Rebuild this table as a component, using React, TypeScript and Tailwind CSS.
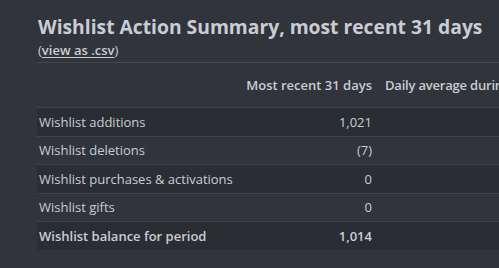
const rows = [
  { label: "Wishlist additions", value: "1,021" },
  { label: "Wishlist deletions", value: "(7)" },
  { label: "Wishlist purchases & activations", value: "0" },
  { label: "Wishlist gifts", value: "0" },
  { label: "Wishlist balance for period", value: "1,014", total: true },
];

export default function App() {
  return (
    <div className="min-h-[268px] overflow-hidden bg-[#31343b] pt-[13px] pl-[37px] font-['Open_Sans',sans-serif] text-[#c8cdd4]">
      <h2 className="whitespace-nowrap pl-px text-[19.3px] font-bold leading-[28px]">
        Wishlist Action Summary, most recent 31 days
      </h2>
      <div className="pl-px text-[13px] leading-[18px]">
        (<a href="#" className="font-semibold underline underline-offset-2">view as .csv</a>)
      </div>
      <div className="mt-[3px] border-t border-[#45484f]">
        <div className="flex h-[44px] items-end pb-[13px] text-[13px] font-semibold leading-[18px] whitespace-nowrap">
          <div className="w-[205px] shrink-0" />
          <div className="w-[136px] shrink-0 pr-[6px] text-right">Most recent 31 days</div>
          <div className="pl-[7px] tracking-[-0.2px]">Daily average during period</div>
        </div>
        {rows.map((r, i) => (
          <div
            key={r.label}
            className={`flex h-[28.5px] items-center border-t border-[#3f4249] text-[13px] leading-[18px] whitespace-nowrap ${
              i % 2 === 0 ? "bg-[#2a2d33]" : "bg-[#31343b]"
            } ${r.total ? "font-semibold" : ""}`}
          >
            <div className="w-[205px] shrink-0 pl-[2px]">{r.label}</div>
            <div className="w-[136px] shrink-0 pr-[6px] text-right">{r.value}</div>
            <div className="pl-[7px]" />
          </div>
        ))}
      </div>
    </div>
  );
}
